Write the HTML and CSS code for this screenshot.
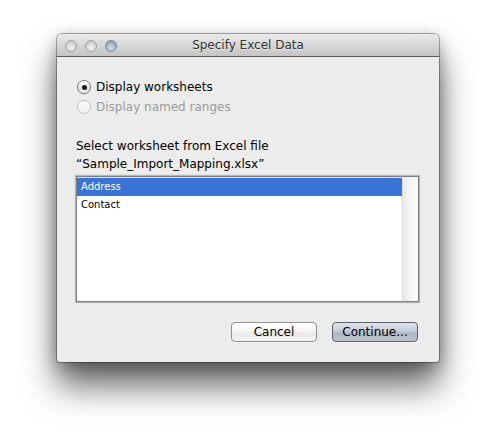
FILE: index.html
```html
<!DOCTYPE html>
<html>
<head>
<meta charset="utf-8">
<link rel="stylesheet" href="styles.css">
</head>
<body>
<div class="window">
  <div class="titlebar">
    <div class="lights">
      <span class="light"></span>
      <span class="light"></span>
      <span class="light focus"></span>
    </div>
    <div class="title">Specify Excel Data</div>
    <div></div>
  </div>
  <div class="content">
    <div class="radios">
      <div class="radio checked"><span class="circle"><span class="dot"></span></span>Display worksheets</div>
      <div class="radio disabled"><span class="circle"></span>Display named ranges</div>
    </div>
    <p class="prompt">Select worksheet from Excel file<br>“Sample_Import_Mapping.xlsx”</p>
    <div class="list">
      <div class="rows">
        <div class="row selected">Address</div>
        <div class="row">Contact</div>
      </div>
      <div class="track"></div>
    </div>
    <div class="buttons">
      <div class="btn">Cancel</div>
      <div class="btn default">Continue...</div>
    </div>
  </div>
</div>
</body>
</html>
```
FILE: styles.css
```css
html, body {
  margin: 0;
  padding: 0;
  background: #ffffff;
}
body {
  box-sizing: border-box;
  min-height: 441px;
  padding: 34px 0 79px 57px;
  font-family: "DejaVu Sans", "Liberation Sans", sans-serif;
  font-size: 12px;
  color: #000;
}
.window {
  width: 382px;
  height: 328px;
  background: #ececec;
  border-radius: 5px 5px 3px 3px;
  box-shadow: 0 0 0 1px rgba(0,0,0,0.3), 0 24px 34px rgba(0,0,0,0.6), 0 4px 16px rgba(0,0,0,0.3);
  display: flex;
  flex-direction: column;
  overflow: hidden;
}
.titlebar {
  height: 22px;
  border-bottom: 1px solid #5a5a5a;
  background: linear-gradient(#ebebeb, #d3d3d3 60%, #c4c4c4);
  display: grid;
  grid-template-columns: 1fr auto 1fr;
  align-items: center;
}
.lights {
  display: flex;
  gap: 8px;
  padding-left: 8px;
  padding-top: 1px;
}
.light {
  width: 12px;
  height: 12px;
  border-radius: 50%;
  box-sizing: border-box;
  border: 1px solid #a2a2a2;
  background: radial-gradient(circle at 50% 70%, #f4f4f4 0%, #d4d4d4 55%, #bdbdbd 100%);
}
.light.focus {
  border-color: #7d8a96;
  background: radial-gradient(circle at 50% 70%, #d6e3ee 0%, #9fb1c0 55%, #7f93a4 100%);
}
.title {
  color: #333333;
  font-size: 12px;
  line-height: 22px;
  text-shadow: 0 1px 0 rgba(255,255,255,0.5);
}
.content {
  padding: 21px 21px 20px 20px;
  display: flex;
  flex-direction: column;
}
.radios {
  display: flex;
  flex-direction: column;
  gap: 2px;
}
.radio {
  height: 18px;
  display: flex;
  align-items: center;
  gap: 5px;
  line-height: 18px;
}
.circle {
  width: 14px;
  height: 14px;
  box-sizing: border-box;
  border-radius: 50%;
  border: 1px solid #7a7a7a;
  background: linear-gradient(#ffffff, #e4e4e4 60%, #f4f4f4);
  display: flex;
  align-items: center;
  justify-content: center;
  box-shadow: 0 1px 1px rgba(0,0,0,0.12);
}
.dot {
  width: 5px;
  height: 5px;
  border-radius: 50%;
  background: #1a1a1a;
}
.radio.disabled {
  color: #9c9c9c;
}
.radio.disabled .circle {
  border-color: #c2c2c2;
  background: linear-gradient(#fbfbfb, #f0f0f0);
  box-shadow: none;
}
.prompt {
  margin: 21px 0 0 -1px;
  line-height: 18px;
}
.list {
  margin: 3px 0 0 -1px;
  height: 126px;
  width: 343px;
  box-sizing: border-box;
  border: 1px solid #7b8187;
  box-shadow: 0 0 1px 1px rgba(110,118,126,0.45), inset 0 1px 1px rgba(0,0,0,0.15);
  background: #ffffff;
  display: flex;
  padding-top: 1px;
}
.rows {
  flex: 1;
  font-size: 10px;
}
.row {
  height: 18px;
  line-height: 18px;
  padding-left: 4px;
}
.row.selected {
  background: #3a74d6;
  color: #ffffff;
}
.track {
  width: 15px;
  margin-top: -1px;
  border-left: 1px solid #dcdcdc;
  background: linear-gradient(90deg, #e9e9e9, #f6f6f6 50%, #fbfbfb);
}
.buttons {
  margin-top: 20px;
  display: flex;
  justify-content: flex-end;
  gap: 15px;
}
.btn {
  width: 86px;
  height: 20px;
  box-sizing: border-box;
  border-radius: 4px;
  border: 1px solid #8d8d8d;
  background: linear-gradient(#ffffff, #f6f6f6 45%, #e8e8e8 55%, #f4f4f4);
  text-align: center;
  line-height: 18px;
  font-size: 12px;
  box-shadow: 0 1px 0 rgba(255,255,255,0.6);
}
.btn.default {
  border-color: #59616c;
  background: linear-gradient(#dfe4ec, #c5ccd7 45%, #aeb7c5 55%, #bcc4d0);
}
```
